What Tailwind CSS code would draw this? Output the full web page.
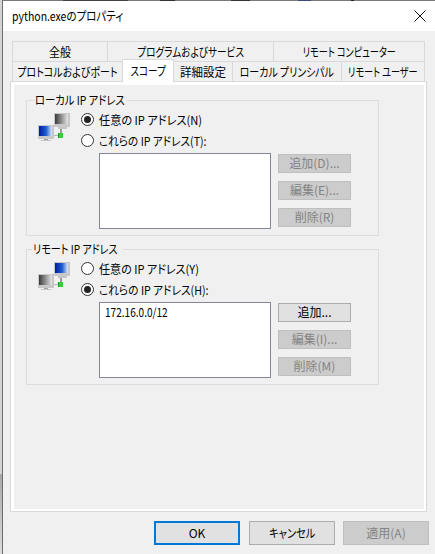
<!DOCTYPE html>
<html lang="ja">
<head>
    <meta charset="UTF-8">
    <title>python.exeのプロパティ</title>
    <script src="https://cdn.jsdelivr.net/npm/@tailwindcss/browser@4"></script>
</head>
<body class="bg-[#f0f0f0]">
<div class="w-[435px] h-[554px] overflow-hidden flex text-[12px] leading-[16px] text-black [font-feature-settings:'palt'] font-['Noto_Sans_CJK_JP','Noto_Sans',sans-serif]">

    <!-- desktop behind the dialog -->
    <div class="w-[2px] h-full flex flex-col">
        <div class="h-[474px] bg-[#d4d4d4]"></div>
        <div class="flex-1 bg-gradient-to-b from-[#a8a8a8] to-[#dcdcdc]"></div>
    </div>

    <!-- Dialog -->
    <div class="w-[433px] h-full border-l border-[#6d6d6d] bg-[#f0f0f0]">
        <!-- window edge, with the desktop showing through -->
        <div class="h-px flex bg-[#7a7a7a]">
            <div class="w-[60px]"></div>
            <div class="w-[65px] bg-[#444]"></div>
            <div class="w-[32px]"></div>
            <div class="w-[15px] bg-[#333]"></div>
            <div class="w-[56px]"></div>
            <div class="w-[19px] bg-[#333]"></div>
            <div class="w-[48px]"></div>
            <div class="w-[13px] bg-[#3a4a80]"></div>
            <div class="w-[40px]"></div>
            <div class="w-[3px] bg-[#222]"></div>
        </div>
        <div class="h-[30px] bg-white flex items-center justify-between pl-[9px] pr-[9px]">
            <span class="inline-block whitespace-nowrap origin-left scale-x-[.84] text-[12.5px]">python.exeのプロパティ</span>
            <svg width="12" height="12" viewBox="0 0 12 12" fill="none" stroke="#111" stroke-width="1"><path d="M.5.5l11 11M11.5.5l-11 11"/></svg>
        </div>

        <!-- Tabs -->
        <div class="pl-[9px] pt-[10px]">
            <div class="flex h-[20px] w-[413px] leading-[19px]">
                <div class="w-[95px] flex justify-center border-l border-t border-[#d9d9d9]"><span class="inline-block whitespace-nowrap scale-x-[.92]">全般</span></div>
                <div class="w-[166px] flex justify-center border-l border-t border-[#d9d9d9]"><span class="inline-block whitespace-nowrap scale-x-[.8]">プログラムおよびサービス</span></div>
                <div class="w-[152px] flex justify-center border-x border-t border-[#d9d9d9]"><span class="inline-block whitespace-nowrap scale-x-[.76]">リモート コンピューター</span></div>
            </div>
            <div class="flex h-[20px] w-[413px] border-t border-[#d9d9d9] leading-[20px]">
                <div class="w-[110px] flex justify-center border-l border-[#d9d9d9]"><span class="inline-block whitespace-nowrap scale-x-[.83]">プロトコルおよびポート</span></div>
                <div class="w-[52px] h-[23px] -mt-[3px] flex justify-center bg-white relative z-10 border-x border-t border-[#d9d9d9] leading-[21px]"><span class="inline-block whitespace-nowrap scale-x-[.8]">スコープ</span></div>
                <div class="w-[58px] flex justify-center"><span class="inline-block whitespace-nowrap scale-x-[.96]">詳細設定</span></div>
                <div class="w-[109px] flex justify-center border-l border-[#d9d9d9]"><span class="inline-block whitespace-nowrap scale-x-[.83]">ローカル プリンシパル</span></div>
                <div class="w-[84px] flex justify-center border-x border-[#d9d9d9]"><span class="inline-block whitespace-nowrap scale-x-[.76]">リモート ユーザー</span></div>
            </div>
        </div>

        <!-- Tab panel -->
        <div class="ml-[7px] w-[417px] h-[431px] border border-[#d9d9d9]">
            <div class="h-full border-l-[3px] border-t-[3px] border-r-[2px] border-b-[2px] border-white pl-[12px] pt-[15px]">

                <!-- Local -->
                <div class="relative w-[353px] h-[136px] border border-[#dcdcdc] flex">
                    <div class="absolute -top-[9px] left-[7px] w-[93px] bg-[#f0f0f0] pl-[1px]"><span class="inline-block whitespace-nowrap origin-left scale-x-[.86]">ローカル IP アドレス</span></div>
                    <svg class="ml-[11px] mt-[12px] shrink-0" width="32" height="30" viewBox="0 0 32 30" shape-rendering="crispEdges">
                        <defs>
                            <linearGradient id="g1" x1="0" x2="1"><stop offset="0" stop-color="#3a3a3a"/><stop offset="1" stop-color="#e6e6e6"/></linearGradient>
                            <linearGradient id="b1" x1="0" x2="1"><stop offset="0" stop-color="#0019a8"/><stop offset=".55" stop-color="#1f5fd0"/><stop offset="1" stop-color="#dbe8f8"/></linearGradient>
                        </defs>
                        <path d="M16 22h5v1h-5z" fill="#b4b4b4"/>
                        <path d="M22 16h2v4h-2z" fill="#9a9a9a"/><path d="M20 14h9v2h-9z" fill="#c4c4c4"/>
                        <rect x="16" y="0" width="16" height="14" fill="#c8c8c8"/><rect x="17" y="1" width="13" height="10" fill="url(#g1)"/>
                        <rect x="20" y="20" width="5" height="5" fill="#35d035"/><path d="M20 20h1v5h-1z" fill="#1c9a1c"/>
                        <rect x="0" y="12" width="16" height="14" fill="#c8c8c8"/><rect x="1" y="13" width="13" height="10" fill="url(#b1)"/>
                        <path d="M6 26h4v1H6z" fill="#a0a0a0"/><path d="M3 27h10v1H3z" fill="#c4c4c4"/>
                    </svg>
                    <div class="ml-[11px] pt-[12px]">
                        <div class="flex items-center h-[13px] gap-[5px]">
                            <span class="shrink-0 w-[13px] h-[13px] rounded-full border border-[#333] bg-white flex items-center justify-center"><span class="w-[7px] h-[7px] rounded-full bg-[#222]"></span></span>
                            <span class="inline-block whitespace-nowrap origin-left scale-x-[.93]">任意の IP アドレス(N)</span>
                        </div>
                        <div class="flex items-center h-[13px] gap-[5px] mt-[8px]">
                            <span class="shrink-0 w-[13px] h-[13px] rounded-full border border-[#333] bg-white"></span>
                            <span class="inline-block whitespace-nowrap origin-left scale-x-[.885]">これらの IP アドレス(T):</span>
                        </div>
                        <div class="flex mt-[6px] ml-[18px]">
                            <div class="w-[172px] h-[76px] bg-white border border-[#82879b]"></div>
                            <div class="ml-[7px] flex flex-col gap-[8px] pt-[1px]">
                                <div class="w-[73px] h-[19px] bg-[#cccccc] border border-[#bfbfbf] text-[#838383] text-center">追加(D)...</div>
                                <div class="w-[73px] h-[19px] bg-[#cccccc] border border-[#bfbfbf] text-[#838383] text-center">編集(E)...</div>
                                <div class="w-[73px] h-[19px] bg-[#cccccc] border border-[#bfbfbf] text-[#838383] text-center">削除(R)</div>
                            </div>
                        </div>
                    </div>
                </div>

                <!-- Remote -->
                <div class="relative w-[353px] h-[136px] mt-[13px] border border-[#dcdcdc] flex">
                    <div class="absolute -top-[9px] left-[5px] w-[91px] bg-[#f0f0f0] pl-[1px]"><span class="inline-block whitespace-nowrap origin-left scale-x-[.84]">リモート IP アドレス</span></div>
                    <svg class="ml-[11px] mt-[12px] shrink-0" width="32" height="30" viewBox="0 0 32 30" shape-rendering="crispEdges">
                        <defs>
                            <linearGradient id="g2" x1="0" x2="1"><stop offset="0" stop-color="#3a3a3a"/><stop offset="1" stop-color="#e6e6e6"/></linearGradient>
                            <linearGradient id="b2" x1="0" x2="1"><stop offset="0" stop-color="#0019a8"/><stop offset=".55" stop-color="#1f5fd0"/><stop offset="1" stop-color="#dbe8f8"/></linearGradient>
                        </defs>
                        <path d="M16 22h5v1h-5z" fill="#b4b4b4"/>
                        <path d="M22 16h2v4h-2z" fill="#9a9a9a"/><path d="M20 14h9v2h-9z" fill="#c4c4c4"/>
                        <rect x="16" y="0" width="16" height="14" fill="#c8c8c8"/><rect x="17" y="1" width="13" height="10" fill="url(#b2)"/>
                        <rect x="20" y="20" width="5" height="5" fill="#35d035"/><path d="M20 20h1v5h-1z" fill="#1c9a1c"/>
                        <rect x="0" y="12" width="16" height="14" fill="#c8c8c8"/><rect x="1" y="13" width="13" height="10" fill="url(#g2)"/>
                        <path d="M6 26h4v1H6z" fill="#a0a0a0"/><path d="M3 27h10v1H3z" fill="#c4c4c4"/>
                    </svg>
                    <div class="ml-[11px] pt-[12px]">
                        <div class="flex items-center h-[13px] gap-[5px]">
                            <span class="shrink-0 w-[13px] h-[13px] rounded-full border border-[#333] bg-white"></span>
                            <span class="inline-block whitespace-nowrap origin-left scale-x-[.92]">任意の IP アドレス(Y)</span>
                        </div>
                        <div class="flex items-center h-[13px] gap-[5px] mt-[8px]">
                            <span class="shrink-0 w-[13px] h-[13px] rounded-full border border-[#333] bg-white flex items-center justify-center"><span class="w-[7px] h-[7px] rounded-full bg-[#222]"></span></span>
                            <span class="inline-block whitespace-nowrap origin-left scale-x-[.89]">これらの IP アドレス(H):</span>
                        </div>
                        <div class="flex mt-[6px] ml-[18px]">
                            <div class="w-[172px] h-[76px] bg-white border border-[#82879b] pl-[5px] pt-[1px]"><span class="inline-block whitespace-nowrap origin-left scale-x-[.84]">172.16.0.0/12</span></div>
                            <div class="ml-[7px] flex flex-col gap-[8px] pt-[1px]">
                                <div class="w-[73px] h-[19px] bg-[#e1e1e1] border border-[#adadad] text-center">追加...</div>
                                <div class="w-[73px] h-[19px] bg-[#cccccc] border border-[#bfbfbf] text-[#838383] text-center">編集(I)...</div>
                                <div class="w-[73px] h-[19px] bg-[#cccccc] border border-[#bfbfbf] text-[#838383] text-center">削除(M)</div>
                            </div>
                        </div>
                    </div>
                </div>
            </div>
        </div>

        <!-- Dialog buttons -->
        <div class="flex pl-[151px] pt-[9px] text-center">
            <div class="w-[86px] h-[24px] bg-[#e1e1e1] border-2 border-[#0078d7] leading-[20px]">OK</div>
            <div class="w-[86px] h-[24px] ml-[9px] flex justify-center bg-[#e1e1e1] border border-[#adadad] leading-[21px]"><span class="inline-block whitespace-nowrap scale-x-[.85]">キャンセル</span></div>
            <div class="w-[86px] h-[24px] ml-[8px] bg-[#cccccc] border border-[#bfbfbf] text-[#838383] leading-[22px]">適用(A)</div>
        </div>
    </div>
</div>
</body>
</html>
